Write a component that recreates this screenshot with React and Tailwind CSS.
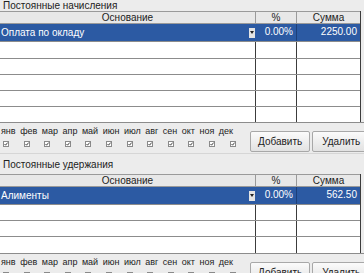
import React from "react";

const months = ["янв", "фев", "мар", "апр", "май", "июн", "июл", "авг", "сен", "окт", "ноя", "дек"];

function Check() {
  return (
    <svg width="6" height="6" viewBox="0 0 6 6" className="block">
      <rect x="0.5" y="0.5" width="5" height="5" fill="#fff" stroke="#8a8a8a" />
      <path d="M1.5 3 L2.6 4.2 L4.6 1.6" fill="none" stroke="#333" strokeWidth="0.9" />
    </svg>
  );
}

function Section({ title, label, percent, sum, rows, titleClass, bottomClass }) {
  return (
    <div>
      <div className={titleClass}>{title}</div>
      <div className="w-[361px] border-r border-[#3c3c3c]">
        <div className="grid grid-cols-[256px_41px_63px] h-[13px] bg-[#e8e8e8] border-t border-b border-[#9a9a9a] leading-[11px] text-[#222]">
          <div className="text-center border-r border-[#9a9a9a]">Основание</div>
          <div className="text-center border-r border-[#9a9a9a]">%</div>
          <div className="text-center">Сумма</div>
        </div>
        <div className="grid grid-cols-[256px_41px_63px] h-[17px] bg-[#2c5aa3] text-white leading-[16px]">
          <div className="flex items-center justify-between pl-[1px] pr-[1px]">
            <span>{label}</span>
            <span className="w-[6px] h-[10px] bg-[#e4e4e4] flex items-center justify-center">
              <svg width="4" height="3" viewBox="0 0 4 3">
                <path d="M0 0 L4 0 L2 3 Z" fill="#222" />
              </svg>
            </span>
          </div>
          <div className="text-right pr-[3px] border-r border-[#1e3f78]">{percent}</div>
          <div className="text-right pr-[3px]">{sum}</div>
        </div>
        {rows.map((h, i) => (
          <div
            key={i}
            className={`grid grid-cols-[256px_41px_63px] bg-white border-t border-[#8c8c8c] ${h}`}
          >
            <div className="border-r border-[#3c3c3c]"></div>
            <div className="border-r border-[#3c3c3c]"></div>
            <div></div>
          </div>
        ))}
      </div>
      <div className={`flex border-t border-[#8c8c8c] ${bottomClass}`}>
        <div className="w-[255px]">
          <div className="flex h-[12px] leading-[12px] text-[9px] text-[#222] gap-[4.5px] pl-[1px] pt-[2px]">
            {months.map((m) => (
              <span key={m}>{m}</span>
            ))}
          </div>
          <div className="flex pl-[3px] mt-[6px]">
            {months.map((m) => (
              <div key={m} className="w-[20.6px]">
                <Check />
              </div>
            ))}
          </div>
        </div>
        <div className="flex gap-[2px] pt-[8px]">
          <button className="w-[60px] h-[21px] border border-[#a8a8a8] rounded-[2px] bg-gradient-to-b from-[#fbfbfb] to-[#e2e2e2] text-[#222] text-[10px]">
            Добавить
          </button>
          <button className="w-[58px] h-[21px] border border-[#a8a8a8] rounded-[2px] bg-gradient-to-b from-[#fbfbfb] to-[#e2e2e2] text-[#222] text-[10px] text-left pl-[9px]">
            Удалить
          </button>
        </div>
      </div>
    </div>
  );
}

export default function App() {
  return (
    <div className="w-[364px] h-[273px] overflow-hidden bg-[#ececec] font-['Liberation_Sans',Arial,sans-serif] text-[10px]">
      <Section
        title="Постоянные начисления"
        label="Оплата по окладу"
        percent="0.00%"
        sum="2250.00"
        rows={["h-[17px]", "h-[16px]", "h-[16px]", "h-[16px]", "h-[16px]"]}
        titleClass="h-[11px] leading-[11px] pl-[3px] text-[#222]"
        bottomClass="h-[31px]"
      />
      <div className="border-t border-[#d6d6d6]"></div>
      <Section
        title="Постоянные удержания"
        label="Алименты"
        percent="0.00%"
        sum="562.50"
        rows={["h-[16px]", "h-[16px]", "h-[17px]"]}
        titleClass="h-[20px] leading-[11px] pl-[3px] pt-[5px] text-[#222]"
        bottomClass="h-[40px]"
      />
    </div>
  );
}
